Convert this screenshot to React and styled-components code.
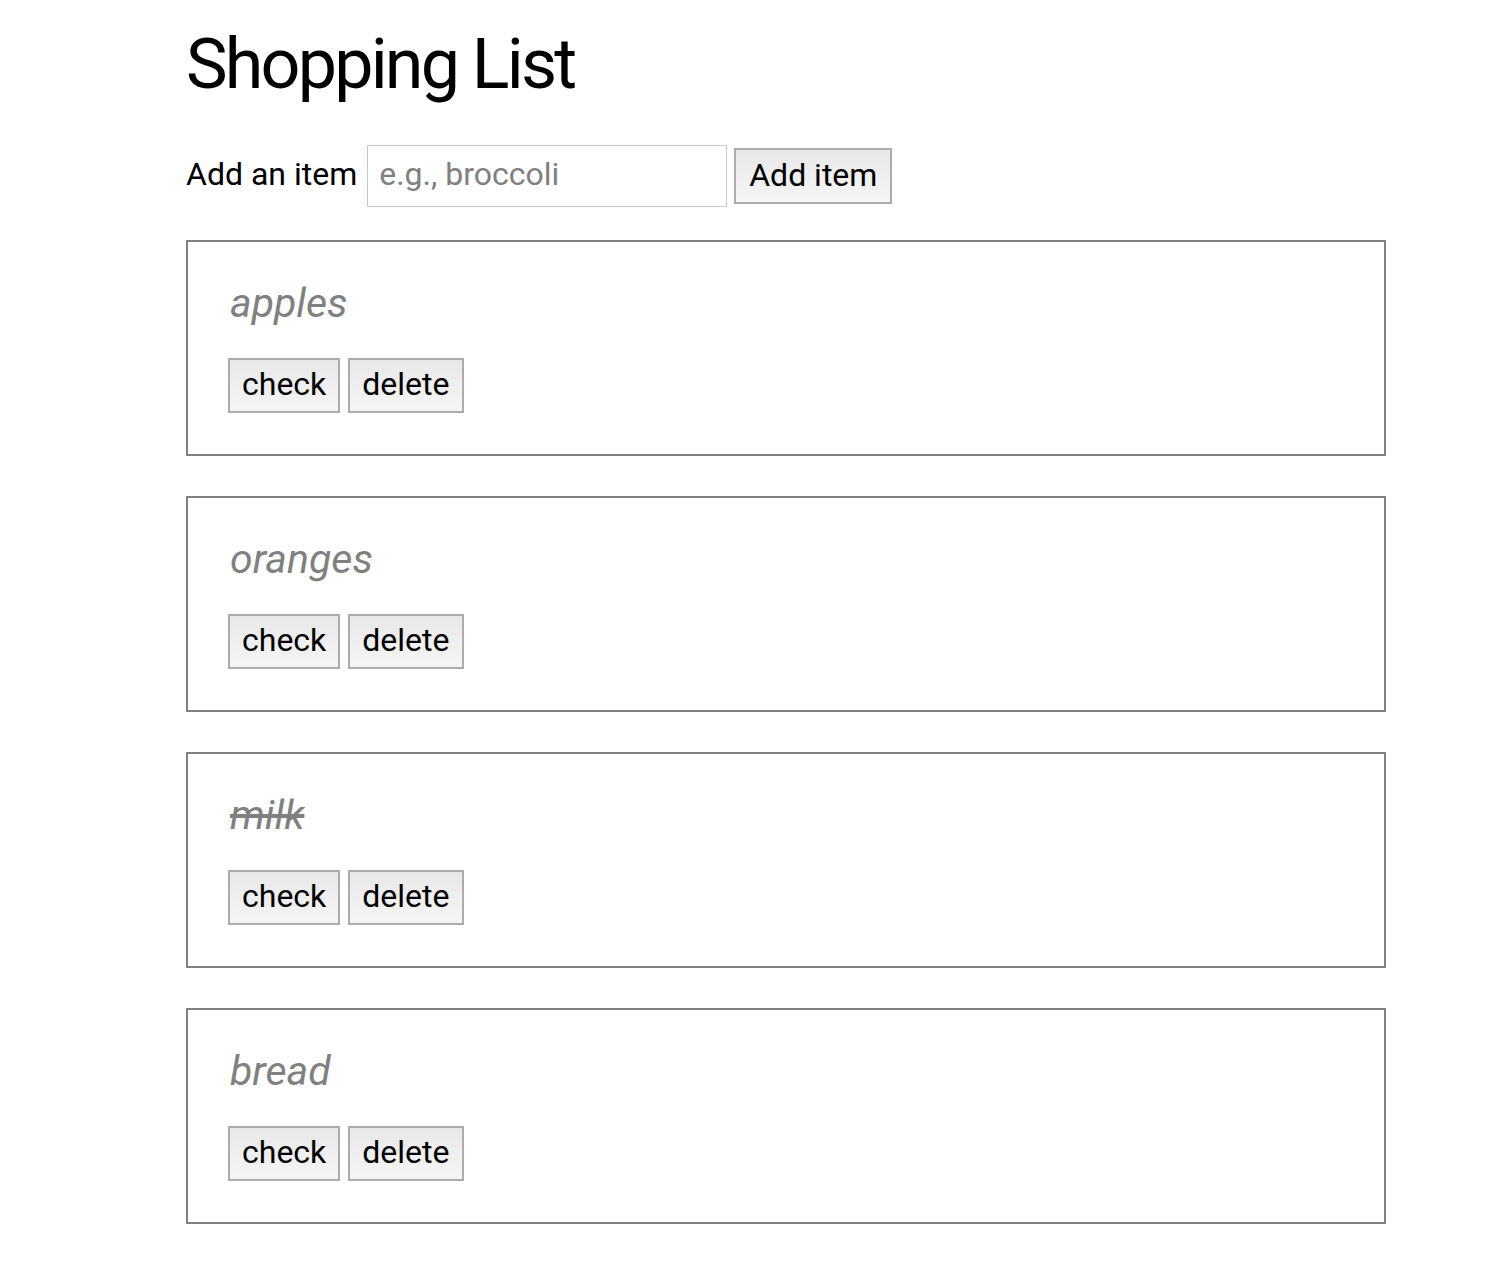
import React from "react";
import styled, { createGlobalStyle } from "styled-components";

const GlobalStyle = createGlobalStyle`
  body {
    margin: 0;
    background: #ffffff;
    font-family: Roboto, "Liberation Sans", Arial, sans-serif;
    color: #000000;
  }
`;

const Page = styled.main`
  width: 1200px;
  margin-left: 186px;
  padding-bottom: 40px;
`;

const Title = styled.h1`
  font-size: 70px;
  font-weight: 400;
  letter-spacing: -2.8px;
  line-height: 84px;
  margin: 22px 0 39px;
`;

const AddForm = styled.form`
  display: flex;
  align-items: center;
  margin-bottom: 33px;
`;

const Label = styled.label`
  font-size: 32px;
  margin-right: 10px;
  padding-bottom: 4px;
`;

const Input = styled.input`
  box-sizing: border-box;
  width: 360px;
  height: 62px;
  border: 1px solid #c8c8c8;
  padding: 0 11px 4px;
  font-family: inherit;
  font-size: 32px;
  margin-right: 7px;

  &::placeholder {
    color: #808080;
  }
`;

const Button = styled.button`
  box-sizing: border-box;
  height: ${(p) => p.$h || 55}px;
  padding: 0 ${(p) => p.$px || 12}px 3px;
  border: 2px solid #acacac;
  border-radius: 0;
  background: linear-gradient(#e8e8e8, #f5f5f5);
  font-family: inherit;
  font-size: 32px;
  color: #000000;
  cursor: pointer;
`;

const List = styled.ul`
  list-style: none;
  margin: 0;
  padding: 0;
  display: flex;
  flex-direction: column;
  gap: 40px;
`;

const Card = styled.li`
  box-sizing: border-box;
  height: 216px;
  border: 2px solid #808080;
  padding: 38px 40px 0;
`;

const ItemName = styled.span`
  display: block;
  padding-left: 2px;
  font-size: 41px;
  font-style: italic;
  color: #808080;
  line-height: 47px;
  margin-bottom: 31px;
  text-decoration: ${(p) => (p.$checked ? "line-through" : "none")};
`;

const Controls = styled.div`
  display: flex;
  gap: 8px;
`;

const items = [
  { name: "apples", checked: false },
  { name: "oranges", checked: false },
  { name: "milk", checked: true },
  { name: "bread", checked: false },
];

export default function App() {
  return (
    <>
      <GlobalStyle />
      <Page>
        <Title>Shopping List</Title>
        <AddForm onSubmit={(e) => e.preventDefault()}>
          <Label htmlFor="item-entry">Add an item</Label>
          <Input id="item-entry" placeholder="e.g., broccoli" />
          <Button type="submit" $h={56} $px={13}>
            Add item
          </Button>
        </AddForm>
        <List>
          {items.map((item) => (
            <Card key={item.name}>
              <ItemName $checked={item.checked}>{item.name}</ItemName>
              <Controls>
                <Button type="button">check</Button>
                <Button type="button">delete</Button>
              </Controls>
            </Card>
          ))}
        </List>
      </Page>
    </>
  );
}
